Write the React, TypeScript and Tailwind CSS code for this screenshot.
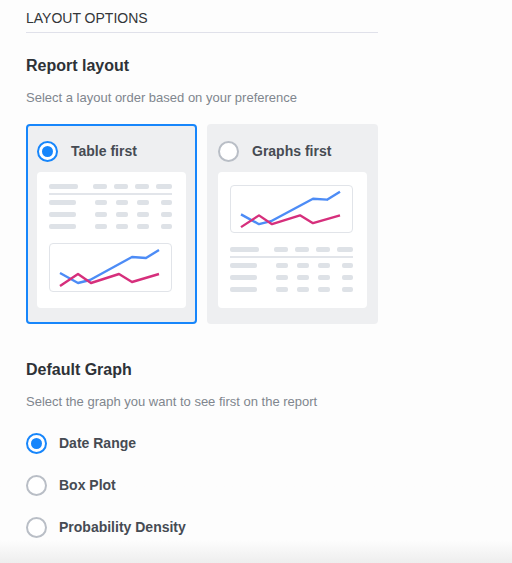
import React from 'react';

const font = { fontFamily: '"Liberation Sans", Arial, sans-serif' };

function Radio({ checked }: { checked?: boolean }) {
  return checked ? (
    <span className="flex h-[21px] w-[21px] shrink-0 items-center justify-center rounded-full border-2 border-[#1786fb] bg-white">
      <span className="h-[11px] w-[11px] rounded-full bg-[#1786fb]" />
    </span>
  ) : (
    <span className="h-[21px] w-[21px] shrink-0 rounded-full border-2 border-[#b9bec6] bg-white" />
  );
}

function Chart({ h }: { h: string }) {
  return (
    <div className={`${h} w-full rounded-[4px] border border-[#e1e4e9] bg-white`}>
      <svg viewBox="0 0 121 47" className="h-full w-full" preserveAspectRatio="none">
        <polyline
          points="10,29 28,39 40,36 82,13 96,14 109,6"
          fill="none"
          stroke="#4d8cf6"
          strokeWidth="2.4"
          strokeLinejoin="round"
        />
        <polyline
          points="10,42 28,30 41,39 69,30 82,38 109,30"
          fill="none"
          stroke="#d62f7c"
          strokeWidth="2.4"
          strokeLinejoin="round"
        />
      </svg>
    </div>
  );
}

function Cell({ w, last }: { w: string; last?: boolean }) {
  return (
    <div className={`flex justify-end ${last ? 'w-[23px]' : 'w-[21px]'}`}>
      <div className={`h-[5px] ${w} rounded-[2px] bg-[#dee2e7]`} />
    </div>
  );
}

function TableRow({ header }: { header?: boolean }) {
  return (
    <div className="flex h-[12px] items-center">
      <div className={`h-[5px] ${header ? 'w-[29px]' : 'w-[27px]'} rounded-[2px] bg-[#dee2e7]`} />
      <div className="flex-1" />
      {header ? (
        <>
          <Cell w="w-[14px]" />
          <Cell w="w-[14px]" />
          <Cell w="w-[14px]" />
          <Cell w="w-[16px]" last />
        </>
      ) : (
        <>
          <Cell w="w-[12px]" />
          <Cell w="w-[12px]" />
          <Cell w="w-[12px]" />
          <Cell w="w-[11px]" last />
        </>
      )}
    </div>
  );
}

function Table() {
  return (
    <div>
      <TableRow header />
      <div className="mt-[1px] h-[2px] bg-[#e2e5ea]" />
      <div className="mt-[1px]">
        <TableRow />
        <TableRow />
        <TableRow />
      </div>
    </div>
  );
}

function LayoutCard({ label, checked, graphsFirst }: { label: string; checked?: boolean; graphsFirst?: boolean }) {
  return (
    <div
      className={`rounded-[4px] border-2 bg-[#eeeff1] px-[9px] pt-[4px] pb-[14px] ${
        checked ? 'border-[#1786fb]' : 'border-transparent'
      }`}
    >
      <div className="flex h-[42px] items-center gap-[13px]">
        <Radio checked={checked} />
        <span className="text-[14px] font-bold text-[#464b53]">{label}</span>
      </div>
      <div className="h-[136px] rounded-[4px] bg-white pl-[12px] pr-[14px]">
        {graphsFirst ? (
          <div className="pt-[13px]">
            <Chart h="h-[48px]" />
            <div className="mt-[10px]">
              <Table />
            </div>
          </div>
        ) : (
          <div className="pt-[8px]">
            <Table />
            <div className="mt-[11px]">
              <Chart h="h-[49px]" />
            </div>
          </div>
        )}
      </div>
    </div>
  );
}

export default function App() {
  const graphs = [
    { label: 'Date Range', checked: true },
    { label: 'Box Plot' },
    { label: 'Probability Density' },
  ];

  return (
    <div
      className="h-[563px] w-full overflow-hidden bg-linear-to-b from-[#fdfdfd] from-[96%] to-[#eeeeee]"
      style={font}
    >
      <div className="w-[378px] pl-[26px]">
        {/* header */}
        <div className="border-b border-[#e0e1ea] pt-[9px] pb-[5px] text-[14px] leading-[18px] text-[#333639]">
          LAYOUT OPTIONS
        </div>

        {/* report layout */}
        <h2 className="mt-[23px] text-[16px] font-bold leading-[20px] text-[#2e3237]">Report layout</h2>
        <p className="mt-[13px] text-[13px] leading-[18px] text-[#80868e]">
          Select a layout order based on your preference
        </p>
        <div className="mt-[17px] grid grid-cols-2 gap-[10px]">
          <LayoutCard label="Table first" checked />
          <LayoutCard label="Graphs first" graphsFirst />
        </div>

        {/* default graph */}
        <h2 className="mt-[36px] text-[16px] font-bold leading-[20px] text-[#2e3237]">Default Graph</h2>
        <p className="mt-[13px] text-[13px] leading-[18px] text-[#80868e]">
          Select the graph you want to see first on the report
        </p>
        <div className="mt-[11px] flex flex-col">
          {graphs.map((g) => (
            <div key={g.label} className="flex h-[42px] items-center gap-[12px]">
              <Radio checked={g.checked} />
              <span className="text-[14px] font-bold text-[#464b53]">{g.label}</span>
            </div>
          ))}
        </div>
      </div>
    </div>
  );
}
